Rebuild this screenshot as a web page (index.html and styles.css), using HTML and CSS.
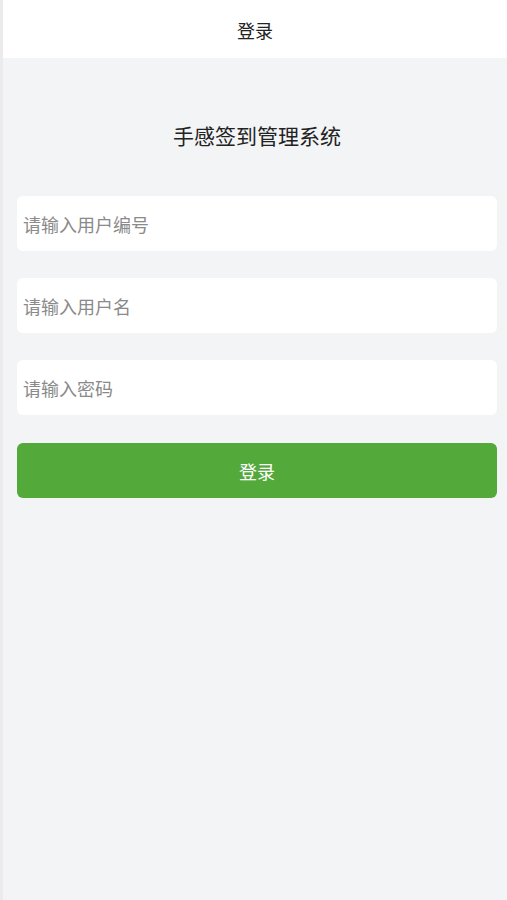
FILE: index.html
```html
<!DOCTYPE html>
<html lang="zh-CN">
<head>
    <meta charset="UTF-8">
    <meta name="viewport" content="width=device-width, initial-scale=1.0">
    <title>登录</title>
    <link rel="stylesheet" href="styles.css">
</head>
<body>

    <div class="page">
        <div class="nav-bar">登录</div>

        <div class="login-box">
            <h1>手感签到管理系统</h1>

            <input class="field" placeholder="请输入用户编号" id="userno">
            <input class="field" placeholder="请输入用户名" id="username">
            <input class="field" type="password" placeholder="请输入密码" id="password">

            <button class="login-btn">登录</button>
        </div>
    </div>

</body>
</html>
```

FILE: styles.css
```css
body {
    font-family: "Noto Sans CJK SC", "Noto Sans", sans-serif;
    margin: 0;
    background-color: #f3f4f6;
}

.page {
    min-height: 900px;
    border-left: 3px solid #ebebeb;
}

.nav-bar {
    height: 58px;
    line-height: 60px;
    background-color: white;
    text-align: center;
    font-size: 18px;
    color: #222;
}

.login-box {
    display: flex;
    flex-direction: column;
    padding: 0 10px 0 14px;
}

h1 {
    font-size: 21px;
    font-weight: normal;
    color: #222;
    text-align: center;
    margin: 62px 0 46px;
    line-height: 30px;
}

.field {
    height: 55px;
    margin-bottom: 27px;
    padding: 0 6px;
    border: none;
    border-radius: 6px;
    background-color: white;
    font-family: inherit;
    font-size: 18px;
    color: #333;
    outline: none;
    box-sizing: border-box;
}

.field::placeholder {
    color: #8a8a8a;
}

.login-btn {
    height: 55px;
    margin-top: 1px;
    border: none;
    border-radius: 6px;
    background-color: #53a93a;
    color: white;
    font-family: inherit;
    font-size: 18px;
    cursor: pointer;
}
```
